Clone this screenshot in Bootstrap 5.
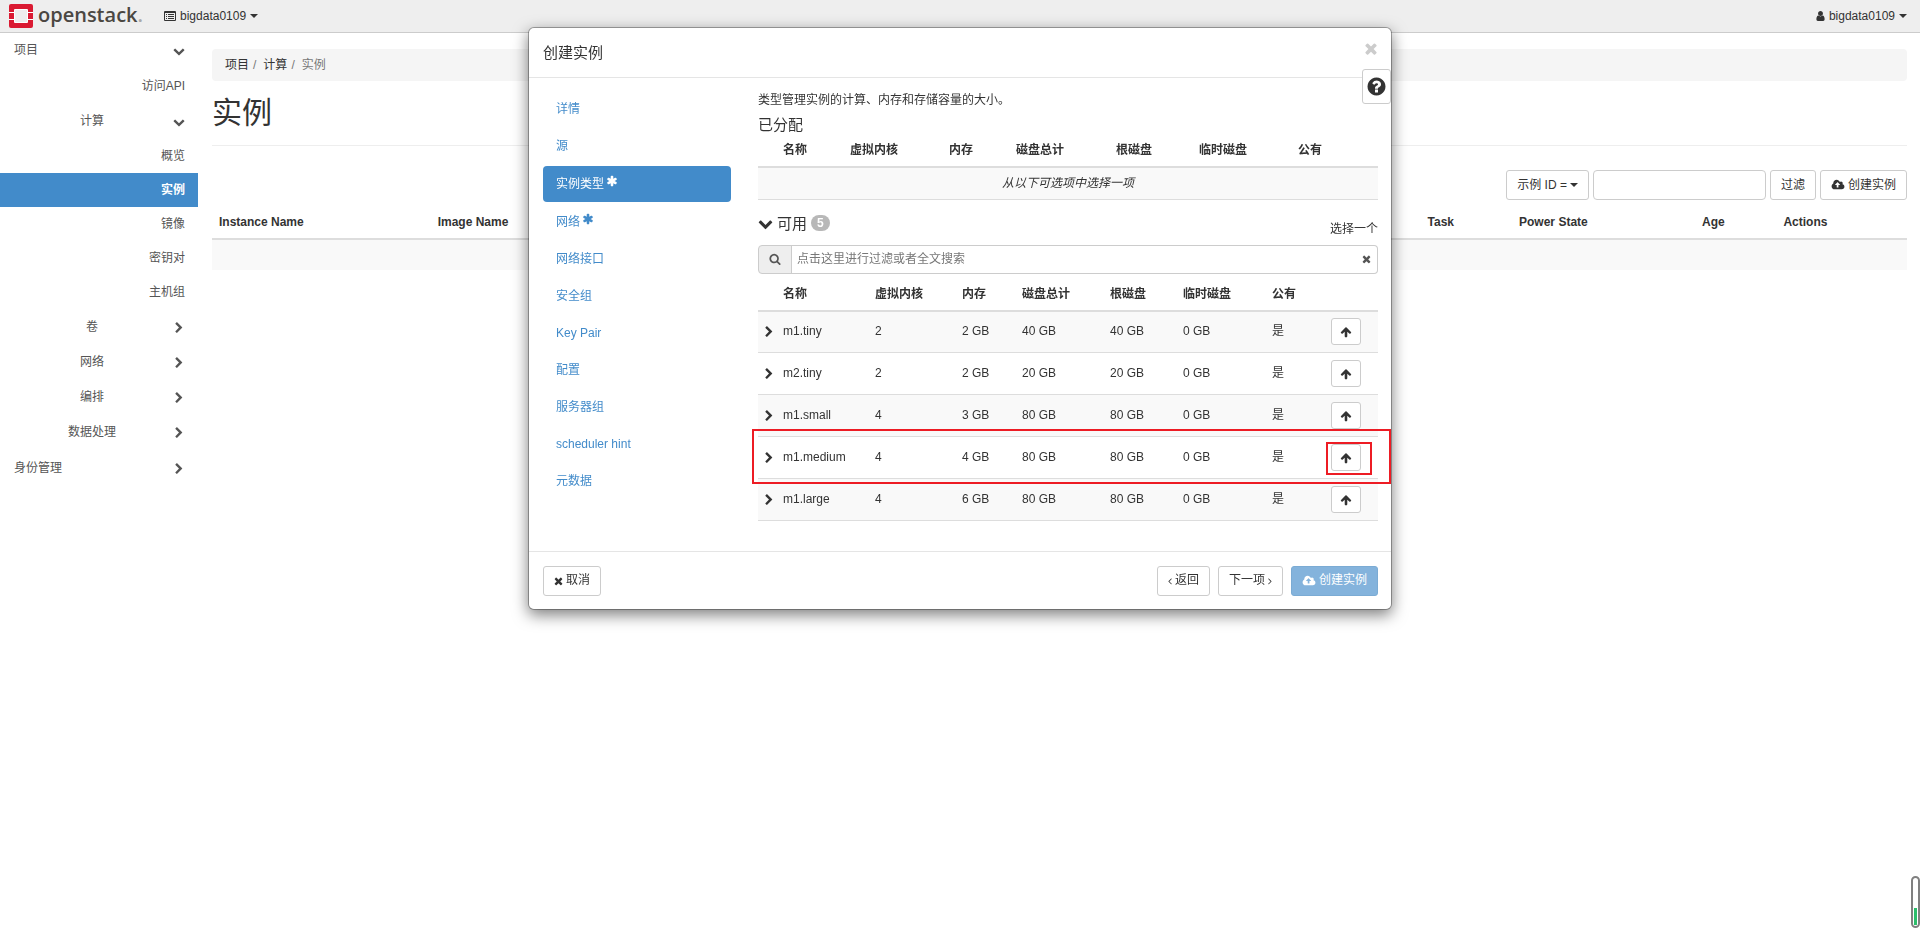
<!DOCTYPE html>
<html lang="zh-CN">
<head>
<meta charset="utf-8">
<meta name="viewport" content="width=device-width, initial-scale=1">
<title>实例 - OpenStack Dashboard</title>
<link href="https://cdn.jsdelivr.net/npm/bootstrap@5.3.0/dist/css/bootstrap.min.css" rel="stylesheet">
<style>
:root { --os-blue: #428bca; --os-line: #ddd; --os-ctl: #ccc; }
body { font-family: "Liberation Sans", "Noto Sans CJK SC", sans-serif; font-size: 12px; line-height: 17px; color: #333; background: #fff; }
a { text-decoration: none; }
.ico { width: 12px; height: 12px; fill: currentColor; flex: none; display: block; }
.ico-wide { width: 14px; }
.ico-slim { width: 9px; }
.ico-angle { width: 4px; }
.os-top { height: 33px; background: #eee; border-bottom: 1px solid var(--os-ctl); padding: 0 13px 0 9px; }
.os-top a { color: #333; }
.os-top .brand { gap: 5px; margin-right: 21px; }
.os-top .menu { gap: 4px; }
.wordmark { font-family: "Open Sans", sans-serif; font-size: 20px; font-weight: 600; line-height: 24px; color: #4b4742; padding-bottom: 2px; }
.wordmark span { color: #aaa; }
.os-caret { border: 4px solid transparent; border-top-color: currentColor; border-bottom: 0; display: inline-block; }
.os-side { width: 198px; flex: none; }
.os-side a { display: flex; align-items: center; color: #555; height: 35px; padding: 0 13px 0 14px; }
.os-side .leaf { justify-content: flex-end; height: 34px; }
.os-side .leaf.first { height: 36px; }
.os-side .leaf.active { background: var(--os-blue); color: #fff; font-weight: 700; }
.os-side .leaf + .group, .os-side .group + .root { margin-top: 1px; }
.os-side .leaf.first + .group { margin-top: 0; }
.os-side .group span { width: 156px; text-align: center; }
.os-main { padding: 16px 13px 0 14px; min-width: 0; }
.os-crumb { background: #f5f5f5; border-radius: 4px; height: 32px; padding: 0 13px; margin: 0; align-items: center; }
.os-crumb a { color: #333; }
.os-crumb .breadcrumb-item + .breadcrumb-item { padding-left: 4px; }
.os-crumb .breadcrumb-item + .breadcrumb-item::before { padding-right: 7px; color: #777; }
.os-crumb .active { color: #777; }
.os-title { font-size: 30px; line-height: 32px; font-weight: 400; margin: 16px 0; }
.os-rule { border-top: 1px solid #eee; opacity: 1; margin: 0 0 24px; }
.os-btn { --bs-btn-font-size: 12px; --bs-btn-line-height: 17px; --bs-btn-padding-x: 10px; --bs-btn-padding-y: 5px; --bs-btn-border-radius: 3px; --bs-btn-color: #333; --bs-btn-bg: #fff; --bs-btn-border-color: #ccc; display: inline-flex; align-items: center; gap: 3px; white-space: nowrap; }
.os-bar { height: 30px; }
.os-primary { --bs-btn-color: #fff; --bs-btn-disabled-color: #fff; --bs-btn-disabled-bg: #428bca; --bs-btn-disabled-border-color: #357ebd; }
.os-filter { width: 173px; height: 30px; font-size: 12px; border-color: var(--os-ctl); border-radius: 4px; }
.os-table { --bs-table-bg: transparent; --bs-table-color: #333; margin: 0; table-layout: fixed; color: #333; }
.os-table > :not(caption) > * > * { padding: 0 7px; border-bottom: 1px solid var(--os-line); height: 42px; box-shadow: none; vertical-align: middle; white-space: nowrap; }
.os-table > thead > tr > th { border-bottom: 2px solid var(--os-line); height: 37px; vertical-align: bottom; padding-bottom: 7px; }
.os-table > tbody > tr.shade { background: #f9f9f9; }
.os-table > tbody > tr > td.toggle { padding-left: 5px; }
.os-chosen > thead > tr > th { height: 32px; }
.os-chosen > tbody > tr > td { height: 32px; }
.os-list > thead > tr > th { height: 39px; }
.os-list > tbody > tr > td { border-bottom: 0; height: 31px; }
.os-dialog { max-width: 864px; margin: 27px auto; }
.os-dialog .modal-content { border: 1px solid rgba(0,0,0,.3); border-radius: 6px; box-shadow: 0 5px 15px rgba(0,0,0,.5); color: #333; }
.os-dialog .modal-header { height: 50px; padding: 0 13px 0 14px; border-color: #e5e5e5; }
.os-dialog .modal-title { font-size: 15px; line-height: 21px; font-weight: 400; }
.os-close { border: 0; background: none; color: #ccc; padding: 0 0 8px; }
.os-close .ico { width: 14px; height: 17px; }
.os-help { position: absolute; top: 41px; right: 0; width: 29px; height: 35px; padding: 0; background: #fff; color: #333; border: 1px solid var(--os-ctl); border-radius: 3px; z-index: 2; justify-content: center; align-items: center; }
.os-help .ico { width: 21px; height: 21px; }
.os-dialog .modal-body { padding: 14px 13px 30px 14px; }
.os-steps { width: 188px; flex: none; gap: 2px; }
.os-steps .nav-link { height: 35px; padding: 0 13px; display: flex; align-items: center; gap: 2px; color: var(--os-blue); border-radius: 4px; font-size: 12px; }
.os-steps .nav-link.required { height: 36px; }
.os-steps .nav-link.active { background: var(--os-blue); color: #fff; }
.os-steps .ico { margin-bottom: 7px; }
.os-pane { padding-left: 27px; min-width: 0; }
.os-intro { margin: 0 0 5px; }
.os-head { font-size: 15px; line-height: 21px; font-weight: 400; margin: 0; }
.os-head .ico { width: 15px; height: 15px; }
.os-avail { padding-top: 13px; margin-bottom: 8px; }
.os-hint { padding-top: 8px; margin-bottom: -1px; }
.os-count { background: #b8b8b8; color: #fff; font-size: 12px; line-height: 16px; font-weight: 700; padding: 0 6px; border-radius: 8px; }
.os-search { height: 29px; }
.os-search .input-group-text { background: #eee; border-color: var(--os-ctl); padding: 0 10px; color: #555; border-radius: 4px; }
.os-search .form-control { font-size: 12px; line-height: 17px; padding: 0 5px; border-color: var(--os-ctl); border-right: 0; }
.os-search .form-control::placeholder { color: #777; opacity: 1; }
.os-search .clear { border: 1px solid var(--os-ctl); border-left: 0; border-radius: 0 4px 4px 0; background: #fff; padding: 0 6px; color: #555; }
.os-up { width: 30px; height: 27px; padding: 0; justify-content: center; }
.os-mark { position: absolute; border: 2px solid #ed1c24; pointer-events: none; z-index: 1; }
.os-mark-row { top: -8px; height: 55px; left: -6px; right: -13px; }
.os-mark-btn { top: 5px; left: 2px; width: 46px; height: 33px; }
.os-dialog .modal-footer { height: 58px; padding: 0 13px 0 14px; border-color: #e5e5e5; gap: 8px; }
.os-dialog .modal-footer > * { margin: 0; }
.os-gauge { position: fixed; right: 0; bottom: 18px; width: 9px; height: 52px; border: 2px solid #808080; border-radius: 5px; background: #fff; z-index: 2000; padding: 1px; display: flex; align-items: flex-end; }
.os-gauge span { width: 100%; height: 17px; background: #2dbe6c; }
</style>
</head>
<body>
<svg width="0" height="0" class="position-absolute" aria-hidden="true">
  <symbol id="down" viewBox="0 0 1792 1792"><path d="M1683 808l-742 741q-19 19-45 19t-45-19l-742-741q-19-19-19-45.500t19-45.500l166-165q19-19 45-19t45 19l531 531 531-531q19-19 45-19t45 19l166 165q19 19 19 45.500t-19 45.500z"/></symbol>
  <symbol id="right" viewBox="0 0 1792 1792"><path d="M1363 877l-742 742q-19 19-45 19t-45-19l-166-166q-19-19-19-45t19-45l531-531-531-531q-19-19-19-45t19-45l166-166q19-19 45-19t45 19l742 742q19 19 19 45t-19 45z"/></symbol>
  <symbol id="star" viewBox="0 0 1792 1792"><path d="M1546 1050q46 26 59.500 77.500t-12.500 97.500l-64 110q-26 46-77.500 59.500t-97.500-12.500l-266-153v307q0 52-38 90t-90 38h-128q-52 0-90-38t-38-90v-307l-266 153q-46 26-97.500 12.500t-77.500-59.500l-64-110q-26-46-12.500-97.500t59.500-77.500l266-154-266-154q-46-26-59.500-77.500t12.500-97.500l64-110q26-46 77.500-59.500t97.500 12.500l266 153v-307q0-52 38-90t90-38h128q52 0 90 38t38 90v307l266-153q46-26 97.500-12.500t77.500 59.500l64 110q26 46 12.500 97.500t-59.500 77.500l-266 154z"/></symbol>
  <symbol id="search" viewBox="0 0 1792 1792"><path d="M1216 832q0-185-131.500-316.500t-316.500-131.500-316.500 131.500-131.500 316.500 131.500 316.500 316.500 131.500 316.500-131.500 131.500-316.500zm512 832q0 52-38 90t-90 38q-54 0-90-38l-343-342q-179 124-399 124-143 0-273.500-55.500t-225-150-150-225-55.500-273.500 55.500-273.500 150-225 225-150 273.500-55.500 273.500 55.500 225 150 150 225 55.500 273.500q0 220-124 399l343 343q37 37 37 90z"/></symbol>
  <symbol id="times" viewBox="192 0 1408 1792"><path d="M1490 1322q0 40-28 68l-136 136q-28 28-68 28t-68-28l-294-294-294 294q-28 28-68 28t-68-28l-136-136q-28-28-28-68t28-68l294-294-294-294q-28-28-28-68t28-68l136-136q28-28 68-28t68 28l294 294 294-294q28-28 68-28t68 28l136 136q28 28 28 68t-28 68l-294 294 294 294q28 28 28 68z"/></symbol>
  <symbol id="up" viewBox="0 0 1792 1792"><path d="M1675 971q0 51-37 90l-75 75q-38 38-91 38-54 0-90-38l-294-293v704q0 52-37.500 84.500t-90.500 32.500h-128q-53 0-90.500-32.500t-37.500-84.500v-704l-294 293q-36 38-90 38t-90-38l-75-75q-38-38-38-90 0-53 38-91l651-651q35-37 90-37 54 0 91 37l651 651q37 39 37 91z"/></symbol>
  <symbol id="aleft" viewBox="560 0 680 1792"><path d="M1203 544q0 13-10 23l-393 393 393 393q10 10 10 23t-10 23l-50 50q-10 10-23 10t-23-10l-466-466q-10-10-10-23t10-23l466-466q10-10 23-10t23 10l50 50q10 10 10 23z"/></symbol>
  <symbol id="aright" viewBox="560 0 680 1792"><path d="M1171 960q0 13-10 23l-466 466q-10 10-23 10t-23-10l-50-50q-10-10-10-23t10-23l393-393-393-393q-10-10-10-23t10-23l50-50q10-10 23-10t23 10l466 466q10 10 10 23z"/></symbol>
  <symbol id="cloud" viewBox="-64 0 1920 1792"><path d="M1216 864q0-14-9-23l-352-352q-9-9-23-9t-23 9l-351 351q-10 12-10 24 0 14 9 23t23 9h224v352q0 13 9.500 22.500t22.500 9.500h192q13 0 22.500-9.500t9.500-22.500v-352h224q13 0 22.500-9.500t9.500-22.500zm640 288q0 159-112.500 271.500t-271.500 112.500h-1088q-185 0-316.500-131.500t-131.500-316.500q0-130 70-240t188-165q-2-30-2-43 0-212 150-362t362-150q156 0 285.500 87t188.500 231q71-62 166-62 106 0 181 75t75 181q0 76-41 138 130 31 213.500 135.500t83.500 238.500z"/></symbol>
  <symbol id="user" viewBox="192 0 1408 1792"><path d="M1536 1399q0 109-62.500 187t-150.500 78h-854q-88 0-150.500-78t-62.500-187q0-85 8.500-160.500t31.500-152 58.500-131 94-89 134.500-34.500q131 128 313 128t313-128q76 0 134.500 34.500t94 89 58.500 131 31.500 152 8.500 160.500zm-256-887q0 159-112.500 271.500t-271.500 112.500-271.500-112.500-112.500-271.500 112.500-271.500 271.500-112.500 271.500 112.500 112.500 271.500z"/></symbol>
  <symbol id="help" viewBox="0 0 1792 1792"><path d="M1024 1376v-192q0-14-9-23t-23-9h-192q-14 0-23 9t-9 23v192q0 14 9 23t23 9h192q14 0 23-9t9-23zm256-672q0-88-55.500-163t-138.500-116-170-41q-243 0-371 213-15 24 8 42l132 100q7 6 19 6 16 0 25-12 53-68 86-92 34-24 86-24 48 0 85.500 26t37.500 59q0 38-20 61t-68 45q-63 28-115.500 86.500t-52.500 125.500v36q0 14 9 23t23 9h192q14 0 23-9t9-23q0-19 21.500-49.500t54.500-49.500q32-18 49-28.500t46-35 44.500-48 28-60.500 12.500-81zm384 192q0 209-103 385.500t-279.500 279.500-385.500 103-385.500-103-279.500-279.500-103-385.500 103-385.500 279.500-279.500 385.500-103 385.500 103 279.500 279.500 103 385.500z"/></symbol>
  <symbol id="list" viewBox="0 0 12 12"><path fill-rule="evenodd" d="M1 1h10a1 1 0 0 1 1 1v8a1 1 0 0 1-1 1H1a1 1 0 0 1-1-1V2a1 1 0 0 1 1-1zM1 3v7h10V3zM2 4h1v1H2zM4 4h6v1H4zM2 6h1v1H2zM4 6h6v1H4zM2 8h1v1H2zM4 8h6v1H4z"/></symbol>
</svg>

<nav class="os-top d-flex align-items-center" aria-label="顶部导航">
  <a href="#" class="brand d-flex align-items-center">
    <svg width="24" height="24" viewBox="0 0 24 24" aria-hidden="true"><path fill="#fff" d="M4 4h16v16H4zM0 8h24v1H0zM0 15h24v1H0z"/><path fill="#eee" d="M6 6h12v12H6z"/><path fill="#da1a32" fill-rule="evenodd" d="M2 0h20a2 2 0 0 1 2 2v6h-5V6a1 1 0 0 0-1-1H6a1 1 0 0 0-1 1v2H0V2a2 2 0 0 1 2-2zM0 9h5v6H0zM19 9h5v6h-5zM0 16h5v2a1 1 0 0 0 1 1h12a1 1 0 0 0 1-1v-2h5v6a2 2 0 0 1-2 2H2a2 2 0 0 1-2-2z"/></svg>
    <span class="wordmark">openstack<span>.</span></span>
  </a>
  <a href="#" class="menu d-flex align-items-center"><svg class="ico"><use href="#list"/></svg>bigdata0109<span class="os-caret"></span></a>
  <a href="#" class="menu d-flex align-items-center ms-auto"><svg class="ico ico-slim"><use href="#user"/></svg>bigdata0109<span class="os-caret"></span></a>
</nav>

<div class="d-flex">
  <nav class="os-side" aria-label="侧边导航">
    <a href="#" class="root justify-content-between">项目<svg class="ico"><use href="#down"/></svg></a>
    <a href="#" class="leaf first">访问API</a>
    <a href="#" class="group"><span>计算</span><svg class="ico ms-auto"><use href="#down"/></svg></a>
    <a href="#" class="leaf">概览</a>
    <a href="#" class="leaf active" aria-current="page">实例</a>
    <a href="#" class="leaf">镜像</a>
    <a href="#" class="leaf">密钥对</a>
    <a href="#" class="leaf">主机组</a>
    <a href="#" class="group"><span>卷</span><svg class="ico ms-auto"><use href="#right"/></svg></a>
    <a href="#" class="group"><span>网络</span><svg class="ico ms-auto"><use href="#right"/></svg></a>
    <a href="#" class="group"><span>编排</span><svg class="ico ms-auto"><use href="#right"/></svg></a>
    <a href="#" class="group"><span>数据处理</span><svg class="ico ms-auto"><use href="#right"/></svg></a>
    <a href="#" class="root justify-content-between">身份管理<svg class="ico"><use href="#right"/></svg></a>
  </nav>

  <main class="os-main flex-grow-1">
    <nav aria-label="breadcrumb">
      <ol class="breadcrumb os-crumb">
        <li class="breadcrumb-item"><a href="#">项目</a></li>
        <li class="breadcrumb-item"><a href="#">计算</a></li>
        <li class="breadcrumb-item active" aria-current="page">实例</li>
      </ol>
    </nav>
    <h1 class="os-title">实例</h1>
    <hr class="os-rule">
    <form class="d-flex justify-content-end">
      <button type="button" class="btn os-btn os-bar me-1">示例 ID = <span class="os-caret"></span></button>
      <input type="text" class="form-control os-filter me-1" aria-label="过滤条件">
      <button type="button" class="btn os-btn os-bar me-1">过滤</button>
      <button type="button" class="btn os-btn os-bar"><svg class="ico ico-wide"><use href="#cloud"/></svg>创建实例</button>
    </form>
    <table class="table os-table os-list">
      <colgroup><col style="width:12.9%"><col style="width:58.400%"><col style="width:5.400%"><col style="width:10.800%"><col style="width:4.800%"><col></colgroup>
      <thead><tr><th>Instance Name</th><th>Image Name</th><th>Task</th><th>Power State</th><th>Age</th><th>Actions</th></tr></thead>
      <tbody><tr class="shade"><td colspan="6"></td></tr></tbody>
    </table>
  </main>
</div>

<div class="modal d-block" tabindex="-1" role="dialog" aria-labelledby="dlgTitle">
  <div class="modal-dialog os-dialog">
    <div class="modal-content">
      <div class="modal-header">
        <h2 class="modal-title" id="dlgTitle">创建实例</h2>
        <button type="button" class="os-close" aria-label="关闭"><svg class="ico"><use href="#times"/></svg></button>
      </div>
      <button type="button" class="os-help d-flex" aria-label="帮助"><svg class="ico"><use href="#help"/></svg></button>
      <div class="modal-body d-flex">
        <nav class="nav flex-column os-steps" aria-label="步骤">
          <a class="nav-link" href="#">详情</a>
          <a class="nav-link" href="#">源</a>
          <a class="nav-link required active" href="#">实例类型<svg class="ico"><use href="#star"/></svg></a>
          <a class="nav-link required" href="#">网络<svg class="ico"><use href="#star"/></svg></a>
          <a class="nav-link" href="#">网络接口</a>
          <a class="nav-link" href="#">安全组</a>
          <a class="nav-link" href="#">Key Pair</a>
          <a class="nav-link" href="#">配置</a>
          <a class="nav-link" href="#">服务器组</a>
          <a class="nav-link" href="#">scheduler hint</a>
          <a class="nav-link" href="#">元数据</a>
        </nav>
        <section class="os-pane flex-grow-1">
          <p class="os-intro">类型管理实例的计算、内存和存储容量的大小。</p>
          <h3 class="os-head">已分配</h3>
          <table class="table os-table os-chosen">
            <colgroup><col style="width:18px"><col style="width:67px"><col style="width:99px"><col style="width:67px"><col style="width:100px"><col style="width:83px"><col style="width:99px"><col></colgroup>
            <thead><tr><th></th><th>名称</th><th>虚拟内核</th><th>内存</th><th>磁盘总计</th><th>根磁盘</th><th>临时磁盘</th><th>公有</th></tr></thead>
            <tbody><tr class="shade"><td colspan="8" class="text-center fst-italic">从以下可选项中选择一项</td></tr></tbody>
          </table>
          <div class="os-avail d-flex align-items-start justify-content-between">
            <h3 class="os-head d-flex align-items-center gap-1"><svg class="ico"><use href="#down"/></svg>可用 <span class="os-count">5</span></h3>
            <span class="os-hint">选择一个</span>
          </div>
          <div class="input-group os-search">
            <label class="input-group-text" for="q" aria-label="搜索"><svg class="ico"><use href="#search"/></svg></label>
            <input type="text" class="form-control" id="q" placeholder="点击这里进行过滤或者全文搜索">
            <button type="button" class="clear" aria-label="清除"><svg class="ico ico-slim"><use href="#times"/></svg></button>
          </div>
          <table class="table os-table">
            <colgroup><col style="width:18px"><col style="width:92px"><col style="width:87px"><col style="width:60px"><col style="width:88px"><col style="width:73px"><col style="width:89px"><col style="width:59px"><col></colgroup>
            <thead><tr><th></th><th>名称</th><th>虚拟内核</th><th>内存</th><th>磁盘总计</th><th>根磁盘</th><th>临时磁盘</th><th>公有</th><th></th></tr></thead>
            <tbody>
              <tr class="shade"><td class="toggle"><svg class="ico"><use href="#right"/></svg></td><td>m1.tiny</td><td>2</td><td>2 GB</td><td>40 GB</td><td>40 GB</td><td>0 GB</td><td>是</td><td><button type="button" class="btn os-btn os-up" aria-label="分配 m1.tiny"><svg class="ico"><use href="#up"/></svg></button></td></tr>
              <tr><td class="toggle"><svg class="ico"><use href="#right"/></svg></td><td>m2.tiny</td><td>2</td><td>2 GB</td><td>20 GB</td><td>20 GB</td><td>0 GB</td><td>是</td><td><button type="button" class="btn os-btn os-up" aria-label="分配 m2.tiny"><svg class="ico"><use href="#up"/></svg></button></td></tr>
              <tr class="shade"><td class="toggle"><svg class="ico"><use href="#right"/></svg></td><td>m1.small</td><td>4</td><td>3 GB</td><td>80 GB</td><td>80 GB</td><td>0 GB</td><td>是</td><td><button type="button" class="btn os-btn os-up" aria-label="分配 m1.small"><svg class="ico"><use href="#up"/></svg></button></td></tr>
              <tr class="position-relative"><td class="toggle"><svg class="ico"><use href="#right"/></svg><span class="os-mark os-mark-row"></span></td><td>m1.medium</td><td>4</td><td>4 GB</td><td>80 GB</td><td>80 GB</td><td>0 GB</td><td>是</td><td class="position-relative"><button type="button" class="btn os-btn os-up" aria-label="分配 m1.medium"><svg class="ico"><use href="#up"/></svg></button><span class="os-mark os-mark-btn"></span></td></tr>
              <tr class="shade"><td class="toggle"><svg class="ico"><use href="#right"/></svg></td><td>m1.large</td><td>4</td><td>6 GB</td><td>80 GB</td><td>80 GB</td><td>0 GB</td><td>是</td><td><button type="button" class="btn os-btn os-up" aria-label="分配 m1.large"><svg class="ico"><use href="#up"/></svg></button></td></tr>
            </tbody>
          </table>
        </section>
      </div>
      <div class="modal-footer">
        <button type="button" class="btn os-btn os-bar me-auto"><svg class="ico ico-slim"><use href="#times"/></svg>取消</button>
        <button type="button" class="btn os-btn os-bar"><svg class="ico ico-angle"><use href="#aleft"/></svg>返回</button>
        <button type="button" class="btn os-btn os-bar">下一项<svg class="ico ico-angle"><use href="#aright"/></svg></button>
        <button type="button" class="btn os-btn os-bar os-primary" disabled><svg class="ico ico-wide"><use href="#cloud"/></svg>创建实例</button>
      </div>
    </div>
  </div>
</div>
<div class="os-gauge" aria-hidden="true"><span></span></div>
<script src="https://cdn.jsdelivr.net/npm/bootstrap@5.3.0/dist/js/bootstrap.bundle.min.js"></script>
</body>
</html>
